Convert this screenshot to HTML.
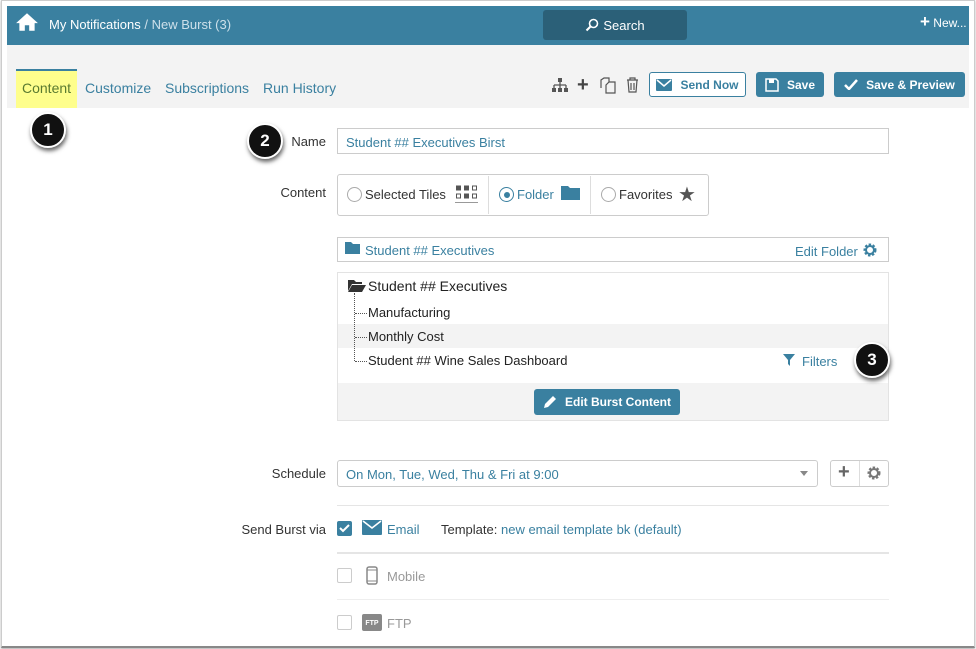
<!DOCTYPE html>
<html><head><meta charset="utf-8">
<style>
*{box-sizing:border-box;margin:0;padding:0}
body{width:976px;height:649px;background:#fff;font-family:"Liberation Sans",sans-serif;font-size:13px;color:#333;position:relative;overflow:hidden}
.a{position:absolute}
.frame{left:1px;top:0;width:974px;height:648px;border:1px solid #ccc;border-bottom:2px solid #888;box-shadow:0 1px 2px #aaa}
.hdr{left:7px;top:6px;width:962px;height:39px;background:#3a80a0}
.sub{left:7px;top:45px;width:962px;height:63px;background:#f3f3f3}
.tab{top:80px;font-size:14px;color:#3a80a0}
.btn{top:72px;height:25px;border-radius:3px;font-weight:bold;font-size:12px;color:#fff;background:#3a80a0;display:flex;align-items:center;justify-content:center;gap:8px}
.lbl{font-size:13px;color:#333;text-align:right;width:100px}
.circ{width:36px;height:36px;border-radius:50%;background:#111;color:#fff;font-weight:bold;font-size:17px;display:flex;align-items:center;justify-content:center;box-shadow:1px 3px 4px #666;border:2px solid #fff}
.blue{color:#3a80a0}
.radio{width:15px;height:15px;border:1px solid #aaa;border-radius:50%;display:inline-block;vertical-align:-3px;margin-right:3px}
.cb{width:15px;height:15px;border:1px solid #ccc;border-radius:2px}
</style></head><body>
<div class="a frame"></div>
<div class="a hdr"></div>
<svg class="a" style="left:15px;top:12px" width="24" height="20" viewBox="0 0 22 18"><path d="M11 1L1 10h3v7h5v-5h4v5h5v-7h3z" fill="#fff"/></svg>
<div class="a" style="left:49px;top:17px;color:#fff;font-size:13px">My Notifications <span style="color:#cde0ea">/ New Burst (3)</span></div>
<div class="a" style="left:543px;top:10px;width:144px;height:30px;background:#2b6078;border-radius:3px;color:#fff;font-size:13px;display:flex;align-items:center;justify-content:center;gap:4px"><svg width="14" height="14" viewBox="0 0 14 14"><circle cx="8.5" cy="5.5" r="4" fill="none" stroke="#fff" stroke-width="1.6"/><path d="M5.5 8.5L1.5 12.5" stroke="#fff" stroke-width="2"/></svg>Search</div>
<div class="a" style="left:920px;top:16px;color:#fff;font-size:12px"><b style="font-size:17px;line-height:10px">+</b> New...</div>
<div class="a sub"></div>
<div class="a" style="left:16px;top:69px;width:61px;height:39px;background:#fefe8c;border-top:2px solid #3a80a0"></div>
<div class="a tab" style="left:22px;color:#5a7a30">Content</div>
<div class="a tab" style="left:85px">Customize</div>
<div class="a tab" style="left:165px">Subscriptions</div>
<div class="a tab" style="left:263px">Run History</div>
<svg class="a" style="left:552px;top:78px" width="16" height="15" viewBox="0 0 16 15"><rect x="6" y="0" width="4" height="4" fill="#555"/><path d="M8 4v3M2 7h12M2 7v3M8 7v3M14 7v3" stroke="#555" stroke-width="1.3" fill="none"/><rect x="0" y="10" width="4" height="4" fill="#555"/><rect x="6" y="10" width="4" height="4" fill="#555"/><rect x="12" y="10" width="4" height="4" fill="#555"/></svg>
<div class="a" style="left:577px;top:74px;font-size:20px;font-weight:bold;color:#444">+</div>
<svg class="a" style="left:600px;top:77px" width="17" height="17" viewBox="0 0 17 17"><path d="M1 11V3l3-2h5v4M6 16V8l3-3h6v11z" fill="none" stroke="#555" stroke-width="1.2"/></svg>
<svg class="a" style="left:626px;top:77px" width="13" height="16" viewBox="0 0 13 16"><path d="M1 3h11M4 3V1h5v2M2 3l1 12h7l1-12M5 6v7M8 6v7" fill="none" stroke="#555" stroke-width="1.2"/></svg>
<div class="a btn" style="left:649px;width:97px;background:#fff;border:1px solid #3a80a0;color:#3a80a0"><svg width="16" height="12" viewBox="0 0 16 12"><rect width="16" height="12" rx="1" fill="#3a80a0"/><path d="M1 1l7 6 7-6" stroke="#fff" stroke-width="1.5" fill="none"/></svg>Send Now</div>
<div class="a btn" style="left:756px;width:68px"><svg width="14" height="14" viewBox="0 0 14 14"><path d="M1 1h10l2 2v10H1z" fill="none" stroke="#fff" stroke-width="1.5"/><rect x="4" y="1" width="5" height="4" fill="#fff"/></svg>Save</div>
<div class="a btn" style="left:834px;width:131px"><svg width="14" height="11" viewBox="0 0 14 11"><path d="M1 6l4 4 8-9" stroke="#fff" stroke-width="2.5" fill="none"/></svg>Save &amp; Preview</div>
<div class="a circ" style="left:30px;top:112px">1</div>
<div class="a circ" style="left:247px;top:123px">2</div>
<div class="a lbl" style="left:226px;top:134px">Name</div>
<div class="a" style="left:337px;top:128px;width:552px;height:26px;border:1px solid #ccc;padding:6px 8px" ><span class="blue">Student ## Executives Birst</span></div>
<div class="a lbl" style="left:226px;top:185px">Content</div>
<div class="a" style="left:337px;top:174px;width:372px;height:42px;border:1px solid #ccc;border-radius:3px"></div>
<div class="a" style="left:488px;top:176px;width:1px;height:38px;background:#ddd"></div>
<div class="a" style="left:590px;top:176px;width:1px;height:38px;background:#ddd"></div>
<div class="a" style="left:347px;top:187px"><span class="radio"></span>Selected Tiles</div>
<svg class="a" style="left:455px;top:184px" width="23" height="20" viewBox="0 0 23 19"><g fill="#555"><rect x="1" y="1" width="5" height="5"/><rect x="9" y="1" width="5" height="5"/><rect x="9" y="9" width="5" height="5"/></g><g fill="none" stroke="#555"><rect x="17.5" y="1.5" width="4" height="4"/><rect x="1.5" y="9.5" width="4" height="4"/><rect x="17.5" y="9.5" width="4" height="4"/></g><path d="M0 18h23" stroke="#999"/></svg>
<div class="a blue" style="left:499px;top:187px"><span class="radio" style="border-color:#3a80a0;position:relative"><span style="position:absolute;left:3.5px;top:3.5px;width:6px;height:6px;border-radius:50%;background:#3a80a0"></span></span>Folder</div>
<svg class="a" style="left:561px;top:185px" width="19" height="15" viewBox="0 0 19 15"><path d="M0 1h7l2 2h10v12H0z" fill="#3a80a0"/></svg>
<div class="a" style="left:601px;top:187px"><span class="radio"></span>Favorites</div>
<div class="a" style="left:678px;top:182px;font-size:20px;color:#555">★</div>
<div class="a" style="left:337px;top:237px;width:552px;height:25px;border:1px solid #ccc"></div>
<svg class="a" style="left:345px;top:242px" width="15" height="12" viewBox="0 0 15 12"><path d="M0 0h6l2 2h7v10H0z" fill="#3a80a0"/></svg>
<div class="a blue" style="left:365px;top:243px">Student ## Executives</div>
<div class="a blue" style="left:795px;top:244px">Edit Folder</div>
<svg class="a" style="left:863px;top:243px" width="14" height="14" viewBox="0 0 14 14"><circle cx="7" cy="7" r="5" fill="none" stroke="#3a80a0" stroke-width="3" stroke-dasharray="2.2 1.5"/><circle cx="7" cy="7" r="4" fill="none" stroke="#3a80a0" stroke-width="2"/></svg>
<div class="a" style="left:337px;top:272px;width:552px;height:149px;border:1px solid #e3e3e3"></div>
<div class="a" style="left:338px;top:324px;width:550px;height:24px;background:#f3f3f3"></div>
<div class="a" style="left:338px;top:383px;width:550px;height:37px;background:#f3f3f3"></div>
<svg class="a" style="left:348px;top:279px" width="18" height="13" viewBox="0 0 18 13"><path d="M0 1h6l2 2h6v2H4L0 12z M4 6h14l-4 7H0z" fill="#333"/></svg>
<div class="a" style="left:368px;top:278px;font-size:14px;color:#222">Student ## Executives</div>
<div class="a" style="left:354px;top:293px;width:1px;height:68px;border-left:1px dotted #555"></div>
<div class="a" style="left:355px;top:313px;width:12px;border-top:1px dotted #555"></div>
<div class="a" style="left:355px;top:337px;width:12px;border-top:1px dotted #555"></div>
<div class="a" style="left:355px;top:361px;width:12px;border-top:1px dotted #555"></div>
<div class="a" style="left:368px;top:305px;color:#222">Manufacturing</div>
<div class="a" style="left:368px;top:329px;color:#222">Monthly Cost</div>
<div class="a" style="left:368px;top:353px;color:#222">Student ## Wine Sales Dashboard</div>
<svg class="a" style="left:783px;top:354px" width="12" height="12" viewBox="0 0 12 12"><path d="M0 0h12L7 6v6L5 10V6z" fill="#3a80a0"/></svg>
<div class="a blue" style="left:802px;top:354px">Filters</div>
<div class="a circ" style="left:854px;top:342px">3</div>
<div class="a btn" style="left:534px;top:389px;width:146px;height:26px;background:#3a80a0"><svg width="14" height="14" viewBox="0 0 14 14"><path d="M1 13l1-4 8-8 3 3-8 8z" fill="#fff"/></svg>Edit Burst Content</div>
<div class="a lbl" style="left:226px;top:466px">Schedule</div>
<div class="a" style="left:337px;top:460px;width:481px;height:27px;border:1px solid #ccc;border-radius:3px;padding:6px 8px"><span class="blue">On Mon, Tue, Wed, Thu &amp; Fri at 9:00</span></div>
<div class="a" style="left:800px;top:471px;border:4px solid transparent;border-top:5px solid #888"></div>
<div class="a" style="left:830px;top:460px;width:59px;height:27px;border:1px solid #ccc;border-radius:3px"></div>
<div class="a" style="left:859px;top:461px;width:1px;height:25px;background:#ddd"></div>
<div class="a" style="left:838px;top:461px;font-size:20px;font-weight:bold;color:#666">+</div>
<svg class="a" style="left:867px;top:466px" width="14" height="14" viewBox="0 0 14 14"><circle cx="7" cy="7" r="5" fill="none" stroke="#777" stroke-width="3" stroke-dasharray="2.2 1.5"/><circle cx="7" cy="7" r="4" fill="none" stroke="#777" stroke-width="2"/></svg>
<div class="a" style="left:337px;top:505px;width:552px;height:1px;background:#e5e5e5"></div>
<div class="a lbl" style="left:226px;top:522px">Send Burst via</div>
<div class="a cb" style="left:337px;top:521px;background:#3a80a0;border-color:#3a80a0"></div>
<svg class="a" style="left:339px;top:524px" width="11" height="9" viewBox="0 0 11 9"><path d="M1 4l3 3 6-6" stroke="#fff" stroke-width="2" fill="none"/></svg>
<svg class="a" style="left:362px;top:520px" width="20" height="15" viewBox="0 0 20 15"><rect width="20" height="15" rx="1" fill="#3a80a0"/><path d="M1 1l9 7 9-7" stroke="#fff" stroke-width="1.6" fill="none"/></svg>
<div class="a blue" style="left:387px;top:522px">Email</div>
<div class="a" style="left:441px;top:522px">Template: <span class="blue">new email template bk (default)</span></div>
<div class="a" style="left:337px;top:552px;width:552px;height:2px;background:#e5e5e5"></div>
<div class="a cb" style="left:337px;top:568px"></div>
<svg class="a" style="left:366px;top:566px" width="12" height="19" viewBox="0 0 12 19"><rect x="1" y="1" width="10" height="17" rx="2" fill="none" stroke="#888" stroke-width="1.5"/><path d="M1 4h10M1 15h10" stroke="#888"/></svg>
<div class="a" style="left:387px;top:569px;color:#999">Mobile</div>
<div class="a" style="left:337px;top:599px;width:552px;height:1px;background:#eee"></div>
<div class="a cb" style="left:337px;top:615px"></div>
<div class="a" style="left:362px;top:614px;width:20px;height:17px;background:#888;border-radius:2px;color:#fff;font-size:7px;font-weight:bold;text-align:center;line-height:19px">FTP</div>
<div class="a" style="left:387px;top:616px;color:#999">FTP</div>
</body></html>
